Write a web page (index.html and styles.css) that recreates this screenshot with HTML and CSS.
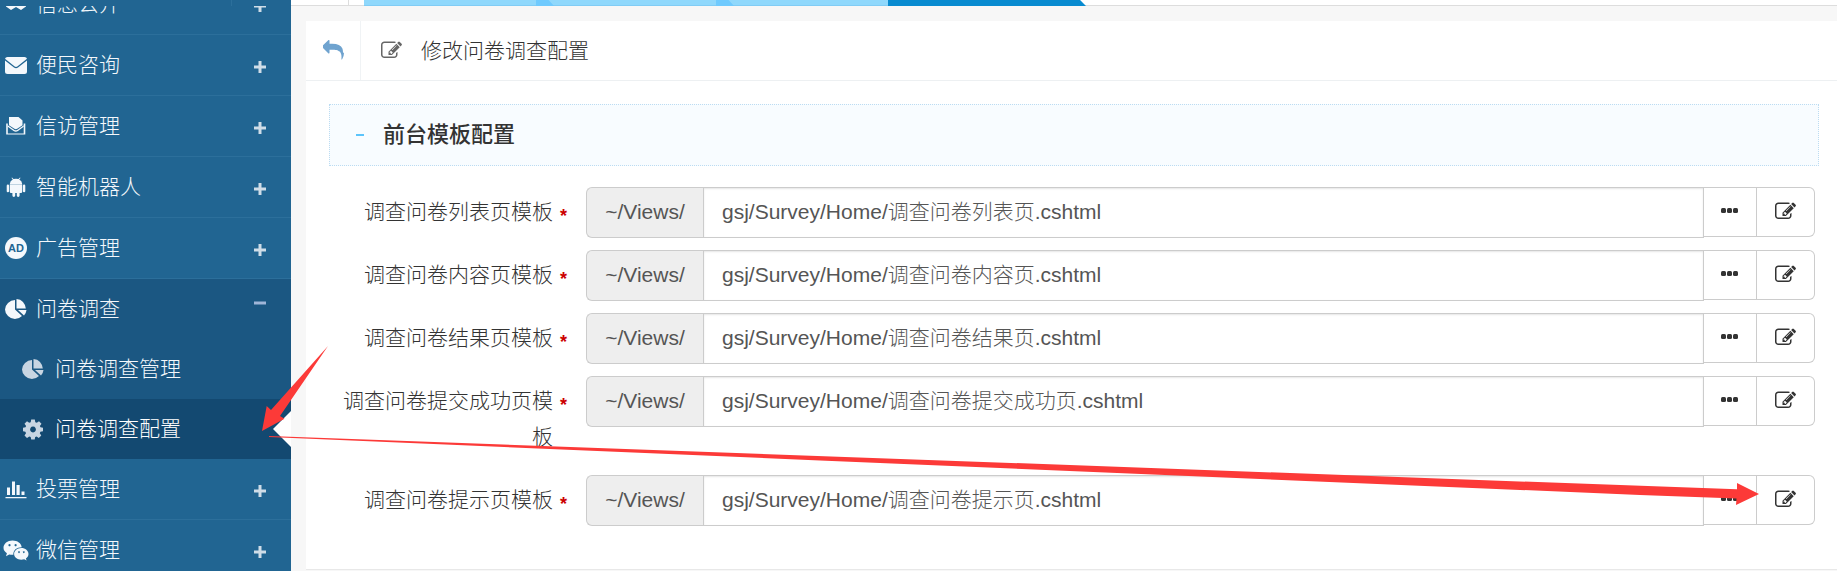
FILE: index.html
```html
<!DOCTYPE html>
<html lang="zh-CN">
<head>
<meta charset="utf-8">
<title>修改问卷调查配置</title>
<link rel="stylesheet" href="styles.css">
</head>
<body>
<svg class="defs" aria-hidden="true">
  <symbol id="i-edit" viewBox="0 0 1792 1792"><path d="M888 1184l116-116-152-152-116 116v56h96v96h56zm440-720q-16-16-33 1l-350 350q-17 17-1 33t33-1l350-350q17-17 1-33zm80 594v190q0 119-84.5 203.5t-203.5 84.5h-832q-119 0-203.5-84.5t-84.5-203.5v-832q0-119 84.5-203.5t203.5-84.5h832q63 0 117 25 15 7 18 23 3 17-9 29l-49 49q-14 14-32 8-23-6-45-6h-832q-66 0-113 47t-47 113v832q0 66 47 113t113 47h832q66 0 113-47t47-113v-126q0-13 9-22l64-64q15-15 35-7t20 29zm-96-738l288 288-672 672h-288v-288zm444 132l-92 92-288-288 92-92q28-28 68-28t68 28l152 152q28 28 28 68t-28 68z"/></symbol>
  <symbol id="i-reply" viewBox="0 0 1792 1792"><path d="M1792 1120q0 166-127 451-3 7-10.500 24t-13.500 30-13 22q-12 17-28 17-15 0-23.500-10t-8.500-25q0-9 2.500-26.500t2.500-23.500q5-68 5-123 0-112-19.500-200.500t-54-153.500-89-112-117-77.500-149.500-49.500-172.500-30-197-9h-224v256q0 26-19 45t-45 19-45-19l-512-512q-19-19-19-45t19-45l512-512q19-19 45-19t45 19 19 45v256h224q713 0 875 403 53 134 53 333z"/></symbol>
  <symbol id="i-more" viewBox="0 0 18 6"><rect x="0" y="0" width="5" height="5" rx="1.500"/><rect x="6" y="0" width="5" height="5" rx="1.500"/><rect x="12" y="0" width="5" height="5" rx="1.500"/></symbol>
  <symbol id="i-plus" viewBox="0 0 12 12"><path d="M4.500 0h3v4.500H12v3H7.500V12h-3V7.500H0v-3h4.500z"/></symbol>
  <symbol id="i-minus" viewBox="0 0 12 12"><path d="M0 4.500h12v3H0z"/></symbol>
  <symbol id="i-mail" viewBox="0 0 22 22"><path d="M2.500 3h17Q21.500 3 22 4.800L12.300 12.500q-1.300.9-2.600 0L0 4.800Q.5 3 2.500 3zM0 6.600l9 6.900q2 1.400 4 0l9-6.900V17.500Q22 20 19.500 20h-17Q0 20 0 17.500z"/></symbol>
  <symbol id="i-inbox" viewBox="0 0 22 22"><path d="M4 2h9.500L17.500 5.500v4.700l-5.300 3.600q-1.400.8-2.800 0L4 10.200z"/><path d="M1.200 8.500h1.600v10h15.900v-10h1.600V19.500H1.200z"/><path d="M2.800 10.200l6.300 4.600q1.700 1 3.400 0l6.200-4.600v1.600l-5.700 4.200q-2.200 1.300-4.400 0l-5.800-4.200z"/></symbol>
  <symbol id="i-android" viewBox="0 0 22 22"><path d="M7 1.500l1.500 1.600q2.500-.8 5 0L15 1.500l.5.400-1.300 1.700Q17 5 17.200 8H4.800Q5 5 7.800 3.600L6.500 1.900zM4.800 8.300h12.400v7.500q0 1.200-1.200 1.200h-1.400v2.600q0 1.400-1.400 1.400t-1.400-1.400V17h-1.600v2.600q0 1.400-1.400 1.400t-1.400-1.400V17H6q-1.200 0-1.200-1.200zM4.100 9.800v5.400q0 1-1.200 1T1.700 15.200V9.800q0-1.200 1.200-1.200t1.200 1.200zM20.300 9.800v5.400q0 1-1.200 1t-1.200-1V9.800q0-1.200 1.200-1.200t1.200 1.200z"/></symbol>
  <symbol id="i-pie" viewBox="0 0 22 22"><path d="M10 2v9.500l7 6.600Q14 21 10 21 6 21 3 18T0 11.500 3 5 10 2z"/><path d="M11.500 1q4 .2 6.500 3t2.800 6.500h-9.300z"/><path d="M13 12h8.500q-.3 3-2.500 5.500z"/></symbol>
  <symbol id="i-gear" viewBox="0 0 22 22"><path fill-rule="evenodd" d="M9.200 1.500h3.600l.5 2.700 1.500.6L17 3.200 19.500 5.700 17.900 8l.6 1.300 2.500.5v3.500l-2.600.5-.6 1.400 1.500 2.300-2.500 2.500-2.200-1.500-1.400.6-.5 2.400H9.200l-.5-2.400-1.400-.6L5 20l-2.500-2.500L4 15.200l-.6-1.400-2.400-.5V9.800l2.500-.5.600-1.300L2.500 5.700 5 3.200l2.200 1.600 1.500-.6zM11 8.600a2.900 2.900 0 1 0 .01 0z"/></symbol>
  <symbol id="i-bars" viewBox="0 0 22 22"><path d="M2 9.500h3V17H2zM7 3.500h3V17H7zM11.500 7h3.200v10h-3.200zM16.500 13.500h3V17h-3zM.5 19h21v1.200H.5z"/></symbol>
  <symbol id="i-wechat" viewBox="0 0 26 22"><path fill-rule="evenodd" d="M9.500 1.500c5 0 8.800 2.800 9.200 6.700-5 0-8.800 3-8.300 7.600q-2 .2-4.200-.4L3 17.200l.9-3C1.700 12.800.5 11 .5 8.700.5 4.700 4.500 1.500 9.500 1.500zM6.500 5a1.100 1.100 0 1 0 .01 0zM12.600 5a1.100 1.100 0 1 0 .01 0z"/><path fill-rule="evenodd" d="M18.300 9c4 0 7.200 2.700 7.200 6 0 1.900-.9 3.300-2.600 4.400l.7 2.100-2.400-1.200q-1.500.4-2.900.4c-4 0-7.200-2.500-7.200-5.700s3.200-6 7.200-6zM16 12.200a.9.900 0 1 0 .01 0zM20.800 12.200a.9.900 0 1 0 .01 0z"/></symbol>
  <symbol id="i-heart" viewBox="0 0 22 22"><path d="M1 8q5-4 10 0 5-4 10 0v5.500l-5 3.500-5-3-5 3-5-3.500z"/></symbol>
</svg>

<header class="topbar">
  <div class="topbar-brand"></div>
  <div class="topbar-toggle"></div>
  <nav class="tabs" aria-label="标签页">
    <div class="tab tab-first"></div>
    <div class="tab tab-wide"></div>
    <div class="tab"></div>
    <div class="tab tab-active"></div>
  </nav>
</header>

<div class="layout">
  <aside class="sidebar">
    <nav class="menu">
      <a class="item" href="#"><svg class="icon"><use href="#i-heart"/></svg><span>信息公开</span><svg class="sign"><use href="#i-plus"/></svg></a>
      <a class="item" href="#"><svg class="icon"><use href="#i-mail"/></svg><span>便民咨询</span><svg class="sign"><use href="#i-plus"/></svg></a>
      <a class="item" href="#"><svg class="icon"><use href="#i-inbox"/></svg><span>信访管理</span><svg class="sign"><use href="#i-plus"/></svg></a>
      <a class="item" href="#"><svg class="icon"><use href="#i-android"/></svg><span>智能机器人</span><svg class="sign"><use href="#i-plus"/></svg></a>
      <a class="item" href="#"><span class="icon ad">AD</span><span>广告管理</span><svg class="sign"><use href="#i-plus"/></svg></a>
      <a class="item item-open" href="#"><svg class="icon"><use href="#i-pie"/></svg><span>问卷调查</span><svg class="sign sign-open"><use href="#i-minus"/></svg></a>
      <a class="sub" href="#"><svg class="icon"><use href="#i-pie"/></svg><span>问卷调查管理</span></a>
      <a class="sub sub-active" href="#" aria-current="page"><svg class="icon"><use href="#i-gear"/></svg><span>问卷调查配置</span></a>
      <a class="item" href="#"><svg class="icon"><use href="#i-bars"/></svg><span>投票管理</span><svg class="sign"><use href="#i-plus"/></svg></a>
      <a class="item" href="#"><svg class="icon icon-wide"><use href="#i-wechat"/></svg><span>微信管理</span><svg class="sign"><use href="#i-plus"/></svg></a>
    </nav>
  </aside>

  <main class="main">
    <section class="panel">
      <div class="panel-head">
        <a class="back" href="#" aria-label="返回"><svg><use href="#i-reply"/></svg></a>
        <h1 class="title"><svg><use href="#i-edit"/></svg>修改问卷调查配置</h1>
      </div>
      <form class="panel-body">
        <h2 class="section"><span class="dash"></span>前台模板配置</h2>
        <div class="row">
          <label class="label" for="f1">调查问卷列表页模板</label><span class="req">*</span>
          <div class="group"><span class="addon">~/Views/</span><input class="input" id="f1" type="text" value="gsj/Survey/Home/调查问卷列表页.cshtml"><button class="btn btn-more" type="button" aria-label="选择"><svg><use href="#i-more"/></svg></button><button class="btn btn-edit" type="button" aria-label="编辑"><svg><use href="#i-edit"/></svg></button></div>
        </div>
        <div class="row">
          <label class="label" for="f2">调查问卷内容页模板</label><span class="req">*</span>
          <div class="group"><span class="addon">~/Views/</span><input class="input" id="f2" type="text" value="gsj/Survey/Home/调查问卷内容页.cshtml"><button class="btn btn-more" type="button" aria-label="选择"><svg><use href="#i-more"/></svg></button><button class="btn btn-edit" type="button" aria-label="编辑"><svg><use href="#i-edit"/></svg></button></div>
        </div>
        <div class="row">
          <label class="label" for="f3">调查问卷结果页模板</label><span class="req">*</span>
          <div class="group"><span class="addon">~/Views/</span><input class="input" id="f3" type="text" value="gsj/Survey/Home/调查问卷结果页.cshtml"><button class="btn btn-more" type="button" aria-label="选择"><svg><use href="#i-more"/></svg></button><button class="btn btn-edit" type="button" aria-label="编辑"><svg><use href="#i-edit"/></svg></button></div>
        </div>
        <div class="row">
          <label class="label" for="f4">调查问卷提交成功页模板</label><span class="req">*</span>
          <div class="group"><span class="addon">~/Views/</span><input class="input" id="f4" type="text" value="gsj/Survey/Home/调查问卷提交成功页.cshtml"><button class="btn btn-more" type="button" aria-label="选择"><svg><use href="#i-more"/></svg></button><button class="btn btn-edit" type="button" aria-label="编辑"><svg><use href="#i-edit"/></svg></button></div>
        </div>
        <div class="row">
          <label class="label" for="f5">调查问卷提示页模板</label><span class="req">*</span>
          <div class="group"><span class="addon">~/Views/</span><input class="input" id="f5" type="text" value="gsj/Survey/Home/调查问卷提示页.cshtml"><button class="btn btn-more" type="button" aria-label="选择"><svg><use href="#i-more"/></svg></button><button class="btn btn-edit" type="button" aria-label="编辑"><svg><use href="#i-edit"/></svg></button></div>
        </div>
      </form>
    </section>
  </main>
</div>

<svg class="arrows" viewBox="0 0 1837 571" preserveAspectRatio="xMinYMin meet" aria-hidden="true">
  <path d="M328 346L271 410 266.700 406 262 431 284.500 418.700 280 416z"/>
  <path d="M269 436L1737 489.300V483L1759 494 1736 505 1736.500 498.500 1640 495 820 460.500 269 437z"/>
</svg>
</body>
</html>
```
FILE: styles.css
```css
* { box-sizing: border-box; }
body {
  margin: 0;
  height: 100vh;
  overflow: hidden;
  display: flex;
  flex-direction: column;
  position: relative;
  background: #f7f7f7;
  color: #333;
  font: 300 21px/36px "Liberation Sans", "Noto Sans CJK SC", sans-serif;
}
a { color: inherit; text-decoration: none; }
svg { fill: currentColor; display: block; flex: none; }
.defs { position: absolute; width: 0; height: 0; }

.topbar {
  display: flex;
  flex: none;
  height: 6px;
  background: linear-gradient(#fff 5px, #ddd 5px);
}
.topbar-brand {
  width: 291px;
  background: linear-gradient(90deg, #216592 231px, #2c6f9b 231px, #2c6f9b 232px, #216592 232px);
}
.topbar-toggle { width: 58px; margin-right: 15px; border-right: 1px solid #ddd; }
.tabs { display: flex; }
.tab {
  width: 172px;
  background: linear-gradient(#8fd8fc 5px, #80ccf5 5px);
}
.tab-wide { width: 180px; }
.tab::before {
  content: "";
  display: block;
  width: 18px;
  height: 6px;
  background: #6fcafe;
  clip-path: polygon(0 0, 70% 0, 100% 100%, 0 100%);
}
.tab-first::before, .tab-active::before { display: none; }
.tab-active {
  width: 198px;
  background: #088bd0;
  clip-path: polygon(0 0, 97% 0, 100% 100%, 0 100%);
}

.layout { display: flex; flex: 1; min-height: 0; }

.sidebar { width: 291px; flex: none; overflow: hidden; background: #216592; color: #f4f8fc; }
.menu { margin-top: -32px; }
.item {
  display: flex;
  align-items: center;
  height: 61px;
  padding: 0 25px 0 5px;
  border-bottom: 1px solid #2c6f9b;
}
.icon { width: 22px; height: 22px; margin-right: 9px; flex: none; }
.icon-wide { width: 26px; margin: 0 7px 0 -2px; }
.ad {
  border-radius: 50%;
  background: #f4f8fc;
  color: #216592;
  font: bold 11px/22px "Liberation Sans", sans-serif;
  text-align: center;
}
.sign { width: 12px; height: 12px; margin: 4px 0 0 auto; color: #cfdde8; }
.sign-open { margin-top: -12px; color: #a0b6d8; }
.item-open { height: 60px; background: #1b5782; border-color: #1b5782; }
.sub {
  display: flex;
  align-items: center;
  height: 60px;
  padding-left: 22px;
  background: #1b5782;
}
.sub .icon { margin-right: 11px; color: #c8d5e2; }
.sub-active { background: #134971; color: #fff; }
.sub-active::after {
  content: "";
  width: 18px;
  height: 36px;
  margin-left: auto;
  background: #fff;
  clip-path: polygon(100% 0, 0 50%, 100% 100%);
}

.main { flex: 1; min-width: 0; padding: 15px 0 0 15px; }
.panel { background: #fff; border-bottom: 1px solid #e8e8e8; }
.panel-head { display: flex; height: 60px; border-bottom: 1px solid #edf0f2; }
.back {
  display: flex;
  align-items: center;
  justify-content: center;
  width: 55px;
  border-right: 1px solid #f0f3f5;
  color: #6fa3cf;
}
.back svg, .title svg, .btn-edit svg { width: 21px; height: 21px; }
.title {
  display: flex;
  align-items: center;
  gap: 19px;
  margin: 0;
  padding-left: 20px;
  font-size: 21px;
  font-weight: 300;
}
.title svg { color: #666; }
.panel-body { padding: 23px 18px 31px 23px; }
.section {
  display: flex;
  align-items: center;
  height: 62px;
  margin: 0 0 21px;
  padding-left: 26px;
  border: 1px dotted #bcdcf2;
  background: #f8fcff;
  font-size: 22px;
  font-weight: 500;
}
.dash { width: 8px; height: 2px; margin-right: 19px; background: #5cc4fb; }

.row { display: flex; align-items: flex-start; margin: 0 4px 12px 0; }
.label { width: 224px; padding: 7px 0 8px; text-align: right; }
.req {
  width: 33px;
  padding: 11px 0 0 7px;
  color: #c00;
  font-weight: bold;
  font-size: 18px;
}
.group { display: flex; flex: 1; min-width: 0; }
.addon, .input, .btn { border: 1px solid #ccc; height: 51px; }
.addon {
  width: 117px;
  border-right: 0;
  border-radius: 6px 0 0 6px;
  background: #eee;
  color: #555;
  line-height: 48px;
  text-align: center;
}
.input {
  flex: 1;
  min-width: 0;
  padding: 0 18px 5px;
  border-radius: 0;
  box-shadow: inset 0 1px 2px rgba(0, 0, 0, .1);
  background: #fff;
  color: #555;
  font: inherit;
}
.btn {
  display: flex;
  align-items: center;
  justify-content: center;
  height: 50px;
  padding: 0 0 2px;
  border-left: 0;
  background: #fff;
  color: #333;
}
.btn-more { width: 53px; }
.btn-more svg { width: 18px; height: 6px; }
.btn-edit { width: 58px; border-radius: 0 6px 6px 0; }

.arrows {
  position: absolute;
  top: 0;
  left: 0;
  width: 100%;
  color: #fc3a38;
  pointer-events: none;
}
```
